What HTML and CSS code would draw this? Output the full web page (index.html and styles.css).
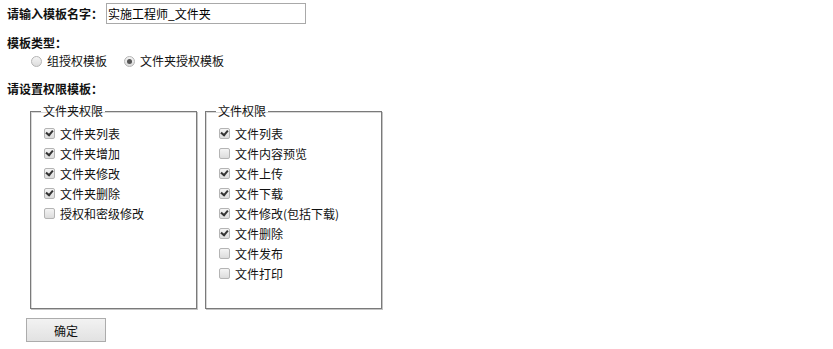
FILE: index.html
```html
<!DOCTYPE html>
<html lang="zh-CN">
<head>
    <meta charset="UTF-8">
    <title>权限模板</title>
    <link rel="stylesheet" href="styles.css">
</head>
<body>
    <div class="name-row">
        <span class="title name-label">请输入模板名字：</span>
        <input class="name-input" type="text" value="实施工程师_文件夹">
    </div>

    <div class="title type-title">模板类型：</div>
    <div class="radios">
        <label class="opt"><input type="radio" name="type">组授权模板</label>
        <label class="opt"><input type="radio" name="type" checked>文件夹授权模板</label>
    </div>

    <div class="title perm-title">请设置权限模板：</div>
    <div class="groups">
        <fieldset class="group group-folder">
            <legend>文件夹权限</legend>
            <label class="item"><input type="checkbox" checked>文件夹列表</label>
            <label class="item"><input type="checkbox" checked>文件夹增加</label>
            <label class="item"><input type="checkbox" checked>文件夹修改</label>
            <label class="item"><input type="checkbox" checked>文件夹删除</label>
            <label class="item"><input type="checkbox">授权和密级修改</label>
        </fieldset>
        <fieldset class="group group-file">
            <legend>文件权限</legend>
            <label class="item"><input type="checkbox" checked>文件列表</label>
            <label class="item"><input type="checkbox">文件内容预览</label>
            <label class="item"><input type="checkbox" checked>文件上传</label>
            <label class="item"><input type="checkbox" checked>文件下载</label>
            <label class="item"><input type="checkbox" checked>文件修改(包括下载)</label>
            <label class="item"><input type="checkbox" checked>文件删除</label>
            <label class="item"><input type="checkbox">文件发布</label>
            <label class="item"><input type="checkbox">文件打印</label>
        </fieldset>
    </div>

    <button class="ok" type="button">确定</button>
</body>
</html>
```

FILE: styles.css
```css
body {
    margin: 0;
    padding: 0;
    font-family: "Noto Sans CJK SC", "Noto Sans", sans-serif;
    font-size: 12px;
    color: #111;
    background: #fff;
}
.title {
    font-weight: bold;
    line-height: 18px;
}
.name-row {
    display: flex;
    align-items: center;
    height: 21px;
    margin-top: 3px;
    padding-left: 7px;
}
.name-label {
    width: 99px;
}
.name-input {
    box-sizing: border-box;
    width: 200px;
    height: 21px;
    margin: 0;
    padding: 0 1px;
    border: 1px solid #a9a9a9;
    font: inherit;
    color: #000;
    outline: none;
}
.type-title {
    margin-top: 10px;
    padding-left: 7px;
}
.radios {
    display: flex;
    gap: 17px;
    padding-left: 31px;
    line-height: 18px;
}
.opt, .item {
    display: flex;
    align-items: center;
}
.perm-title {
    margin-top: 10px;
    padding-left: 7px;
}

input[type=radio], input[type=checkbox] {
    -webkit-appearance: none;
    appearance: none;
    position: relative;
    width: 11px;
    height: 11px;
    margin: 0 5px 0 0;
    border: 1px solid #b4b4b4;
    background: linear-gradient(#f4f4f4, #dcdcdc);
    box-sizing: border-box;
}
input[type=radio] {
    border-radius: 50%;
}
input[type=radio]:checked::after {
    content: "";
    position: absolute;
    left: 2px;
    top: 2px;
    width: 5px;
    height: 5px;
    border-radius: 50%;
    background: #555;
}
input[type=checkbox] {
    border-radius: 2px;
}
input[type=checkbox]:checked::after {
    content: "";
    position: absolute;
    left: 2px;
    top: 0px;
    width: 5px;
    height: 3px;
    border-left: 2px solid #333;
    border-bottom: 2px solid #333;
    transform: rotate(-50deg);
    transform-origin: 40% 70%;
    top: 1px;
}

.groups {
    display: flex;
    gap: 8px;
    margin-top: 4px;
    margin-left: 30px;
}
.group {
    box-sizing: border-box;
    height: 207px;
    margin: 0;
    padding: 3px 8px 0 13px;
    border: 1px solid #7a7a7a;
    box-shadow: 1px 1px 0 #c4c4c4, inset 1px 1px 0 #d8d8d8;
    min-width: 0;
}
.group-folder {
    width: 167px;
}
.group-file {
    width: 177px;
}
.group legend {
    padding: 0 2px;
    margin-left: -3px;
    line-height: 18px;
}
.item {
    height: 20px;
}

.ok {
    display: block;
    width: 80px;
    height: 24px;
    margin: 9px 0 0 26px;
    padding: 0;
    border: 1px solid #acacac;
    border-radius: 0;
    background: linear-gradient(#f2f2f2, #e2e2e2);
    font: inherit;
    color: #111;
}
```
